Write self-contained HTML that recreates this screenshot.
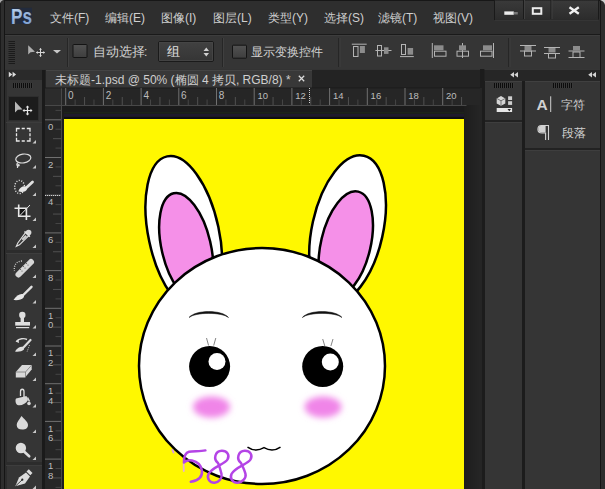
<!DOCTYPE html>
<html><head><meta charset="utf-8">
<style>
*{margin:0;padding:0;box-sizing:border-box}
html,body{width:605px;height:489px;overflow:hidden;background:#1c1c1c;font-family:"Liberation Sans",sans-serif;}
.a{position:absolute}
.t{position:absolute;color:#cfcfcf;font-size:12px;line-height:14px;white-space:nowrap}
</style></head><body>
<!-- menu bar -->
<div class="a" style="left:2px;top:0;width:603px;height:35px;background:#2e2e2e;border-top:1px solid #171717"></div>
<div class="a" style="left:0;top:33.5px;width:605px;height:2px;background:#1a1a1a"></div>
<svg class="a" style="left:0;top:0" width="40" height="34"><defs><linearGradient id="psg" x1="0" y1="0" x2="0.4" y2="1"><stop offset="0" stop-color="#c2d8ef"/><stop offset="1" stop-color="#7d9fd0"/></linearGradient></defs>
<rect x="11.5" y="7.8" width="20.5" height="16" fill="#222b3d"/>
<text x="11" y="23.6" font-size="21.5" font-weight="bold" fill="url(#psg)" font-family="Liberation Sans" textLength="21" lengthAdjust="spacingAndGlyphs">Ps</text>
<path d="M0 0 H3 C1.5 0.5 0.5 1.5 0 3Z" fill="#9a9a9a"/></svg>
<div class="t" style="left:50px;top:11px">文件(F)</div>
<div class="t" style="left:105px;top:11px">编辑(E)</div>
<div class="t" style="left:161px;top:11px">图像(I)</div>
<div class="t" style="left:213px;top:11px">图层(L)</div>
<div class="t" style="left:268px;top:11px">类型(Y)</div>
<div class="t" style="left:324px;top:11px">选择(S)</div>
<div class="t" style="left:378px;top:11px">滤镜(T)</div>
<div class="t" style="left:433px;top:11px">视图(V)</div>
<!-- window controls -->
<svg class="a" style="left:490px;top:0" width="115" height="24" viewBox="490 0 115 24">
<defs><linearGradient id="wc" x1="0" y1="0" x2="0" y2="1"><stop offset="0" stop-color="#3a3a3a"/><stop offset="1" stop-color="#2c2c2c"/></linearGradient></defs>
<rect x="494.5" y="0" width="104" height="19.5" fill="url(#wc)" stroke="#1a1a1a" stroke-width="1"/>
<rect x="495" y="19.5" width="103.5" height="1" fill="#3c3c3c"/>
<rect x="523" y="0" width="1" height="19" fill="#1a1a1a"/><rect x="524" y="0" width="1" height="19" fill="#404040"/>
<rect x="550.5" y="0" width="1" height="19" fill="#1a1a1a"/><rect x="551.5" y="0" width="1" height="19" fill="#404040"/>
<rect x="504.3" y="11.4" width="9.5" height="3.4" fill="#ececec"/>
<rect x="513.8" y="12" width="4" height="2.5" fill="#777"/>
<rect x="532.8" y="8.2" width="8.5" height="5.6" fill="none" stroke="#ececec" stroke-width="2"/>
<path d="M569.5 7.2 L578.8 13.8 M578.8 7.2 L569.5 13.8" stroke="#f0f0f0" stroke-width="2.3"/>
<path d="M599 0 C602 0 605 2 605 5 V0Z" fill="#c8c8c8"/>
</svg>

<!-- options bar -->
<div class="a" style="left:0;top:35px;width:605px;height:35px;background:#353535;border-top:1px solid #3d3d3d"></div>
<div class="a" style="left:0;top:69px;width:605px;height:1px;background:#1a1a1a"></div>


<!-- options bar contents -->
<svg class="a" style="left:0;top:35px" width="605" height="35" viewBox="0 35 605 35">
<rect x="0" y="35" width="5" height="35" fill="#242424"/>
<rect x="1.5" y="35" width="1.5" height="35" fill="#1a1a1a"/>
<g fill="#1b1b1b">
<rect x="8.5" y="41" width="6.5" height="1"/><rect x="8.5" y="43" width="6.5" height="1"/><rect x="8.5" y="45" width="6.5" height="1"/><rect x="8.5" y="47" width="6.5" height="1"/><rect x="8.5" y="49" width="6.5" height="1"/><rect x="8.5" y="51" width="6.5" height="1"/><rect x="8.5" y="53" width="6.5" height="1"/><rect x="8.5" y="55" width="6.5" height="1"/><rect x="8.5" y="57" width="6.5" height="1"/><rect x="8.5" y="59" width="6.5" height="1"/><rect x="8.5" y="61" width="6.5" height="1"/><rect x="8.5" y="63" width="6.5" height="1"/>
</g>
<path d="M28.2 45.2 L28.2 54.5 L30.5 52.3 L35 51.8Z" fill="#b0b0b0"/>
<g stroke="#d8d8d8" stroke-width="1" fill="none"><path d="M40.5 48.5 V56.5 M36.5 52.5 H44.5"/></g>
<path d="M40.5 48 l-1.5 1.7 h3Z M40.5 57 l-1.5 -1.7 h3Z M36 52.5 l1.7 -1.5 v3Z M45 52.5 l-1.7 -1.5 v3Z" fill="#d8d8d8"/>
<path d="M53 50 L61 50 L57 53.6Z" fill="#c8c8c8"/>
<rect x="67" y="38" width="1" height="29" fill="#262626"/><rect x="68" y="38" width="1" height="29" fill="#3f3f3f"/>
<defs><linearGradient id="cb" x1="0" y1="0" x2="0" y2="1"><stop offset="0" stop-color="#525252"/><stop offset="1" stop-color="#3e3e3e"/></linearGradient>
<linearGradient id="dd" x1="0" y1="0" x2="0" y2="1"><stop offset="0" stop-color="#414141"/><stop offset="1" stop-color="#353535"/></linearGradient></defs>
<rect x="73" y="44.5" width="14" height="13" rx="0.6" fill="url(#cb)" stroke="#141414" stroke-width="1"/>
<rect x="158.5" y="41.5" width="55" height="20" rx="1.5" fill="url(#dd)" stroke="#1a1a1a" stroke-width="1"/><rect x="159.5" y="42.5" width="53" height="18" fill="none" stroke="#474747" stroke-width="0.8"/>
<path d="M203.5 51 L206.3 47.5 L209 51Z M203.5 53 L206.3 56.5 L209 53Z" fill="#d0d0d0"/>
<rect x="222" y="38" width="1" height="29" fill="#262626"/><rect x="223" y="38" width="1" height="29" fill="#3f3f3f"/>
<rect x="232.5" y="45.2" width="14" height="13" rx="0.6" fill="url(#cb)" stroke="#141414" stroke-width="1"/>
<rect x="338" y="38" width="1.2" height="29" fill="#262626"/><rect x="339.5" y="38" width="1" height="29" fill="#3f3f3f"/>
<rect x="508" y="38" width="1.2" height="29" fill="#262626"/><rect x="509.5" y="38" width="1" height="29" fill="#3f3f3f"/>
<g fill="none" stroke="#b4b4b4" stroke-width="1">
<!-- align top -->
<path d="M351.8 44.2 H366.7"/><rect x="353.5" y="46.5" width="4.5" height="10"/>
<!-- align vcenter -->
<path d="M375.4 50.5 H391.5"/><rect x="377.5" y="45.5" width="4" height="10.5"/>
<!-- align bottom -->
<path d="M400 56.6 H413.8"/><rect x="401.5" y="44.5" width="4" height="10"/>
<!-- align left -->
<path d="M432.3 43 V58"/><rect x="434.5" y="51.2" width="11.5" height="5"/>
<!-- align hcenter -->
<path d="M462.5 43 V58"/><rect x="457" y="51.2" width="11.5" height="5"/>
<!-- align right -->
<path d="M493.5 43 V58"/><rect x="480.5" y="51.2" width="11.5" height="5"/>
<!-- distribute -->
<path d="M520 45.5 H536 M520 51 H536"/><rect x="524.5" y="51" width="7" height="5"/>
<path d="M544 47.5 H560 M544 53.5 H560"/><rect x="548.5" y="53.5" width="7" height="4.5"/>
<path d="M568.5 51 H584.5 M568.5 57.5 H584.5"/><rect x="573" y="52" width="7" height="5.5"/>
</g>
<g fill="#8c8c8c">
<rect x="359.9" y="46" width="5" height="7"/>
<rect x="384" y="47.3" width="4.5" height="6.6"/>
<rect x="407.6" y="48" width="5.5" height="6.7"/>
<rect x="434" y="45.3" width="9.5" height="5"/>
<rect x="459" y="45.3" width="7" height="5"/>
<rect x="483" y="45.3" width="9" height="5"/>
<rect x="524.5" y="46" width="7" height="4"/>
<rect x="548.5" y="48" width="7" height="4.5"/>
<rect x="573" y="46" width="7" height="4.5"/>
</g>
</svg>
<div class="t" style="left:93px;top:45px;font-size:12.7px;line-height:14px">自动选择</div><div class="t" style="left:144px;top:45px;font-size:12px;line-height:14px">:</div>
<div class="t" style="left:167px;top:45px;font-size:13px;line-height:14px;color:#e0e0e0">组</div>
<div class="t" style="left:251px;top:45px;font-size:12px;line-height:14px">显示变换控件</div>

<!-- header row -->
<div class="a" style="left:0;top:69px;width:605px;height:20px;background:#232323;border-top:1px solid #333"></div>

<!-- left toolbar -->
<div class="a" style="left:5px;top:80px;width:37px;height:409px;background:#353535"></div>
<div class="a" style="left:42px;top:70px;width:3px;height:419px;background:#1a1a1a"></div>


<!-- toolbar icons -->
<svg class="a" style="left:0;top:0" width="45" height="489" viewBox="0 0 45 489">
<rect x="5" y="70" width="2" height="419" fill="#2c2c2c"/>
<rect x="6" y="70" width="36" height="10" fill="#2a2a2a"/>
<path d="M8.8 71.8 L12.3 74.5 L8.8 77.2Z M12.6 71.8 L16.1 74.5 L12.6 77.2Z" fill="#dcdcdc"/>
<g><rect x="13" y="83" width="1" height="5" fill="#0c0c0c"/><rect x="14" y="83" width="1" height="5" fill="#3a3a3a"/><rect x="15" y="83" width="1" height="5" fill="#0c0c0c"/><rect x="16" y="83" width="1" height="5" fill="#3a3a3a"/><rect x="17" y="83" width="1" height="5" fill="#0c0c0c"/><rect x="18" y="83" width="1" height="5" fill="#3a3a3a"/><rect x="19" y="83" width="1" height="5" fill="#0c0c0c"/><rect x="20" y="83" width="1" height="5" fill="#3a3a3a"/><rect x="21" y="83" width="1" height="5" fill="#0c0c0c"/><rect x="22" y="83" width="1" height="5" fill="#3a3a3a"/><rect x="23" y="83" width="1" height="5" fill="#0c0c0c"/><rect x="24" y="83" width="1" height="5" fill="#3a3a3a"/><rect x="25" y="83" width="1" height="5" fill="#0c0c0c"/><rect x="26" y="83" width="1" height="5" fill="#3a3a3a"/><rect x="27" y="83" width="1" height="5" fill="#0c0c0c"/><rect x="28" y="83" width="1" height="5" fill="#3a3a3a"/><rect x="29" y="83" width="1" height="5" fill="#0c0c0c"/><rect x="30" y="83" width="1" height="5" fill="#3a3a3a"/><rect x="31" y="83" width="1" height="5" fill="#0c0c0c"/><rect x="32" y="83" width="1" height="5" fill="#3a3a3a"/></g>
<rect x="8.5" y="96.5" width="30" height="24" fill="#1c1c1c" stroke="#2e2e2e" stroke-width="1"/>
<path d="M15 101.5 L15 112.5 L17.8 109.8 L22.5 109.5Z" fill="#b8b8b8"/>
<g stroke="#e6e6e6" stroke-width="1.2" fill="none"><path d="M27.5 106 V115 M23 110.5 H32"/></g>
<path d="M27.5 105.5 l-1.8 2 h3.6Z M27.5 115.5 l-1.8 -2 h3.6Z M22.5 110.5 l2 -1.8 v3.6Z M32.5 110.5 l-2 -1.8 v3.6Z" fill="#e6e6e6"/>
<!-- separators -->
<rect x="6" y="122" width="36" height="1" fill="#3c3c3c"/>
<rect x="6" y="250" width="36" height="3" fill="#2c2c2c"/>
<rect x="6" y="253" width="36" height="1" fill="#3d3d3d"/>
<rect x="6" y="462" width="36" height="3" fill="#2c2c2c"/>
<rect x="6" y="465" width="36" height="1" fill="#3d3d3d"/>
<!-- triangles -->
<g fill="#c8c8c8">
<path d="M32.5 143.5 L36 143.5 L36 140Z"/>
<path d="M32.5 168.5 L36 168.5 L36 165Z"/>
<path d="M32.5 196 L36 196 L36 192.5Z"/>
<path d="M32.5 221 L36 221 L36 217.5Z"/>
<path d="M32.5 248 L36 248 L36 244.5Z"/>
<path d="M32.5 278 L36 278 L36 274.5Z"/>
<path d="M32.5 303.5 L36 303.5 L36 300Z"/>
<path d="M32.5 328.5 L36 328.5 L36 325Z"/>
<path d="M32.5 356 L36 356 L36 352.5Z"/>
<path d="M32.5 381 L36 381 L36 377.5Z"/>
<path d="M32.5 407.5 L36 407.5 L36 404Z"/>
<path d="M32.5 433 L36 433 L36 429.5Z"/>
<path d="M32.5 460 L36 460 L36 456.5Z"/>
<path d="M32.5 489 L36 489 L36 485.5Z"/>
</g>
<!-- marquee -->
<path d="M16.5 131.7 V128.5 H19.7 M26.8 128.5 H30 V131.7 M30 137.8 V141 H26.8 M19.7 141 H16.5 V137.8 M21.7 128.5 H24.8 M21.7 141 H24.8 M16.5 133.3 V136.2 M30 133.3 V136.2" fill="none" stroke="#e8e8e8" stroke-width="1.3"/>
<!-- lasso -->
<ellipse cx="23.3" cy="158.5" rx="7.6" ry="4.4" transform="rotate(-8 23.3 158.5)" fill="none" stroke="#dcdcdc" stroke-width="1.2"/>
<path d="M18.5 162.5 C16 163.5 16.5 166 18.5 165.8 C20 165.5 19 164 17.5 165 L17.5 168" fill="none" stroke="#dcdcdc" stroke-width="1.2"/>
<!-- quick selection -->
<ellipse cx="19.6" cy="187" rx="4.9" ry="6.6" fill="none" stroke="#e0e0e0" stroke-width="1.4" stroke-dasharray="1.1 1.5"/>
<path d="M32.5 182 L25.5 188.5" stroke="#e0e0e0" stroke-width="2.8" stroke-linecap="round"/>
<path d="M26.5 187 C24.5 185.5 20 186.5 18.3 191.3 C21.5 192.8 26.5 192 27 189Z" fill="#e6e6e6"/>
<!-- crop -->
<rect x="19.5" y="209" width="6.2" height="6.5" fill="#141414"/><g stroke="#e8e8e8" stroke-width="1.6" fill="none"><path d="M18.7 204.5 V216.2 H30.5 M14.5 208.3 H26.4 V220"/></g>
<path d="M19.5 216 L30 205" stroke="#e0e0e0" stroke-width="1"/>
<!-- eyedropper -->
<circle cx="28.6" cy="232.6" r="2.8" fill="#d8d8d8"/>
<path d="M25.8 232.2 L29 235.4 L19.5 244.8 L16.3 246.3 L17.8 243Z" fill="#3a3a3a" stroke="#e0e0e0" stroke-width="1.1"/><path d="M25.5 235 L27 236.5 L23 240.5 L21.5 239Z" fill="#d0d0d0"/>
<path d="M24.5 231.5 L29.8 236.8" stroke="#e0e0e0" stroke-width="1.5"/>
<!-- healing -->
<path d="M22 261 C16 261 13.5 266 14.5 271" fill="none" stroke="#d0d0d0" stroke-width="1.3" stroke-dasharray="1 1.3"/>
<path d="M18.5 274.5 L31 262" stroke="#d6d6d6" stroke-width="6" stroke-linecap="round"/>
<g fill="#555"><circle cx="22" cy="271" r="0.6"/><circle cx="25" cy="268" r="0.6"/><circle cx="28" cy="265" r="0.6"/><circle cx="20.5" cy="269.5" r="0.6"/><circle cx="23.5" cy="266.5" r="0.6"/><circle cx="26.5" cy="263.5" r="0.6"/></g>
<!-- brush -->
<path d="M31.5 286.8 L22.8 295.5" stroke="#e0e0e0" stroke-width="2.4" stroke-linecap="round"/>
<path d="M23.5 294.5 C21 293 16.5 295 13.5 300 C17 300.5 22 300 24 297Z" fill="#e6e6e6"/>
<!-- stamp -->
<circle cx="22.3" cy="315" r="3.2" fill="#dedede"/>
<rect x="20.6" y="316" width="3.4" height="6.5" fill="#dedede"/>
<rect x="15.2" y="322" width="14.8" height="3.6" fill="#dedede"/>
<rect x="16" y="327" width="13.2" height="1.2" fill="#dedede"/>
<!-- history brush -->
<path d="M16.5 341.5 C19 338.5 24 338 27 339.5" fill="none" stroke="#dcdcdc" stroke-width="1.4"/>
<path d="M15.5 341.5 L18.5 339 L19 343Z" fill="#dcdcdc"/>
<path d="M30.5 340 L23 348" stroke="#dcdcdc" stroke-width="2.2" stroke-linecap="round"/>
<path d="M23.5 347 C21 346 17 347.5 15 351.5 C18 352 22 351.5 24 349.5Z" fill="#dedede"/>
<path d="M29.5 345 L27 352" stroke="#bbb" stroke-width="1" stroke-dasharray="1 1"/>
<!-- eraser -->
<path d="M15.8 372 L22 365 L31.7 365 L31.7 369.5 L25 377.5 L15.8 377.5Z" fill="#d8d8d8"/>
<path d="M15.8 372 L25.5 372 L31.7 365 M25.5 372 V377.5" stroke="#7a7a7a" stroke-width="0.8" fill="none"/>
<!-- bucket -->
<path d="M20.5 396 V391.5 C20.5 388.5 24 388.5 24 391.5 V397" fill="none" stroke="#e0e0e0" stroke-width="1.3"/>
<path d="M16 398.5 L26.5 396 L28 400 C26 404 21 406 17.5 405 C15.5 404 15 400 16 398.5Z" fill="#d8d8d8"/>
<circle cx="29" cy="403.5" r="1.8" fill="#d8d8d8"/>
<path d="M27.5 397.5 L29.5 401.5" stroke="#d8d8d8" stroke-width="1.5"/>
<!-- blur -->
<path d="M21.5 416 C19 420 16.7 422.5 16.7 425 C16.7 428 18.8 429.6 22.3 429.6 C25.8 429.6 28 428 28 425 C28 422 24.5 419.5 21.5 416Z" fill="#dadada"/>
<!-- dodge -->
<circle cx="20.9" cy="448" r="5.2" fill="#dcdcdc"/>
<path d="M23.5 451 L29.2 456.3" stroke="#dcdcdc" stroke-width="2.6" stroke-linecap="round"/>
<!-- pen -->
<path d="M15.3 486.3 L19 477.5 L26 472.5 L30 476.5 L25 483.5Z" fill="#dcdcdc"/>
<path d="M26.5 471.5 L28.8 469.2 L32.5 473 L30.3 475.3Z" fill="#dcdcdc"/>
<path d="M15.8 485.8 L22 480" stroke="#333" stroke-width="0.9"/>
<circle cx="22.3" cy="479.7" r="1.1" fill="#222"/>
</svg>

<!-- doc tab -->
<div class="a" style="left:46px;top:70px;width:266px;height:18px;background:#383838;border-top:1px solid #444"></div>
<div class="t" style="left:55px;top:73px;font-size:12px">未标题-1.psd @ 50% (椭圆 4 拷贝, RGB/8) *</div>
<svg class="a" style="left:297px;top:74px" width="10" height="9"><path d="M1.8 1.8L7.2 7.2M7.2 1.8L1.8 7.2" stroke="#dcdcdc" stroke-width="1.25"/></svg>

<!-- rulers -->
<svg class="a" style="left:0;top:0" width="605" height="489" viewBox="0 0 605 489">
<defs><linearGradient id="pb" x1="0" y1="0" x2="1" y2="0"><stop offset="0" stop-color="#1d1d1d"/><stop offset="1" stop-color="#262626"/></linearGradient></defs>
<rect x="45" y="88" width="437" height="401" fill="#1e1e1e"/>
<rect x="464" y="105" width="18" height="384" fill="url(#pb)"/>
<rect x="45" y="88" width="435" height="17" fill="#262626"/>
<rect x="45" y="88" width="16.5" height="401" fill="#262626"/>
<rect x="45" y="88" width="16.5" height="17" fill="#2c2c2c"/>
<rect x="45" y="105" width="421.5" height="1" fill="#484848"/>
<rect x="61" y="88" width="1" height="401" fill="#484848"/>
<rect x="45" y="87.5" width="437" height="0.8" fill="#1a1a1a"/>
<rect x="65.20" y="88" width="1" height="17" fill="#707070"/>
<rect x="74.62" y="99.5" width="1" height="5.5" fill="#464646"/>
<rect x="84.05" y="97" width="1" height="8" fill="#505050"/>
<rect x="93.48" y="99.5" width="1" height="5.5" fill="#464646"/>
<rect x="102.90" y="88" width="1" height="17" fill="#707070"/>
<rect x="112.33" y="99.5" width="1" height="5.5" fill="#464646"/>
<rect x="121.75" y="97" width="1" height="8" fill="#505050"/>
<rect x="131.18" y="99.5" width="1" height="5.5" fill="#464646"/>
<rect x="140.60" y="88" width="1" height="17" fill="#707070"/>
<rect x="150.03" y="99.5" width="1" height="5.5" fill="#464646"/>
<rect x="159.45" y="97" width="1" height="8" fill="#505050"/>
<rect x="168.88" y="99.5" width="1" height="5.5" fill="#464646"/>
<rect x="178.30" y="88" width="1" height="17" fill="#707070"/>
<rect x="187.73" y="99.5" width="1" height="5.5" fill="#464646"/>
<rect x="197.15" y="97" width="1" height="8" fill="#505050"/>
<rect x="206.57" y="99.5" width="1" height="5.5" fill="#464646"/>
<rect x="216.00" y="88" width="1" height="17" fill="#707070"/>
<rect x="225.43" y="99.5" width="1" height="5.5" fill="#464646"/>
<rect x="234.85" y="97" width="1" height="8" fill="#505050"/>
<rect x="244.28" y="99.5" width="1" height="5.5" fill="#464646"/>
<rect x="253.70" y="88" width="1" height="17" fill="#707070"/>
<rect x="263.12" y="99.5" width="1" height="5.5" fill="#464646"/>
<rect x="272.55" y="97" width="1" height="8" fill="#505050"/>
<rect x="281.98" y="99.5" width="1" height="5.5" fill="#464646"/>
<rect x="291.40" y="88" width="1" height="17" fill="#707070"/>
<rect x="300.83" y="99.5" width="1" height="5.5" fill="#464646"/>
<rect x="310.25" y="97" width="1" height="8" fill="#505050"/>
<rect x="319.68" y="99.5" width="1" height="5.5" fill="#464646"/>
<rect x="329.10" y="88" width="1" height="17" fill="#707070"/>
<rect x="338.53" y="99.5" width="1" height="5.5" fill="#464646"/>
<rect x="347.95" y="97" width="1" height="8" fill="#505050"/>
<rect x="357.38" y="99.5" width="1" height="5.5" fill="#464646"/>
<rect x="366.80" y="88" width="1" height="17" fill="#707070"/>
<rect x="376.23" y="99.5" width="1" height="5.5" fill="#464646"/>
<rect x="385.65" y="97" width="1" height="8" fill="#505050"/>
<rect x="395.07" y="99.5" width="1" height="5.5" fill="#464646"/>
<rect x="404.50" y="88" width="1" height="17" fill="#707070"/>
<rect x="413.93" y="99.5" width="1" height="5.5" fill="#464646"/>
<rect x="423.35" y="97" width="1" height="8" fill="#505050"/>
<rect x="432.78" y="99.5" width="1" height="5.5" fill="#464646"/>
<rect x="442.20" y="88" width="1" height="17" fill="#707070"/>
<rect x="451.62" y="99.5" width="1" height="5.5" fill="#464646"/>
<rect x="461.05" y="97" width="1" height="8" fill="#505050"/>

<text x="68.0" y="99.2" font-size="10" fill="#bdbdbd" font-family="Liberation Sans">0</text>
<text x="105.7" y="99.2" font-size="10" fill="#bdbdbd" font-family="Liberation Sans">2</text>
<text x="143.4" y="99.2" font-size="10" fill="#bdbdbd" font-family="Liberation Sans">4</text>
<text x="181.1" y="99.2" font-size="10" fill="#bdbdbd" font-family="Liberation Sans">6</text>
<text x="218.8" y="99.2" font-size="10" fill="#bdbdbd" font-family="Liberation Sans">8</text>
<text x="257.5" y="99.2" font-size="9.5" fill="#bdbdbd" font-family="Liberation Sans">10</text>
<text x="295.2" y="99.2" font-size="9.5" fill="#bdbdbd" font-family="Liberation Sans">12</text>
<text x="332.9" y="99.2" font-size="9.5" fill="#bdbdbd" font-family="Liberation Sans">14</text>
<text x="370.6" y="99.2" font-size="9.5" fill="#bdbdbd" font-family="Liberation Sans">16</text>
<text x="408.3" y="99.2" font-size="9.5" fill="#bdbdbd" font-family="Liberation Sans">18</text>
<text x="446.0" y="99.2" font-size="9.5" fill="#bdbdbd" font-family="Liberation Sans">20</text>
<rect x="55.5" y="109.88" width="5.5" height="1" fill="#464646"/>
<rect x="45" y="119.30" width="16" height="1" fill="#707070"/>
<rect x="55.5" y="128.72" width="5.5" height="1" fill="#464646"/>
<rect x="53" y="138.15" width="8" height="1" fill="#505050"/>
<rect x="55.5" y="147.57" width="5.5" height="1" fill="#464646"/>
<rect x="45" y="157.00" width="16" height="1" fill="#707070"/>
<rect x="55.5" y="166.43" width="5.5" height="1" fill="#464646"/>
<rect x="53" y="175.85" width="8" height="1" fill="#505050"/>
<rect x="55.5" y="185.28" width="5.5" height="1" fill="#464646"/>
<rect x="45" y="194.70" width="16" height="1" fill="#707070"/>
<rect x="55.5" y="204.12" width="5.5" height="1" fill="#464646"/>
<rect x="53" y="213.55" width="8" height="1" fill="#505050"/>
<rect x="55.5" y="222.98" width="5.5" height="1" fill="#464646"/>
<rect x="45" y="232.40" width="16" height="1" fill="#707070"/>
<rect x="55.5" y="241.82" width="5.5" height="1" fill="#464646"/>
<rect x="53" y="251.25" width="8" height="1" fill="#505050"/>
<rect x="55.5" y="260.68" width="5.5" height="1" fill="#464646"/>
<rect x="45" y="270.10" width="16" height="1" fill="#707070"/>
<rect x="55.5" y="279.53" width="5.5" height="1" fill="#464646"/>
<rect x="53" y="288.95" width="8" height="1" fill="#505050"/>
<rect x="55.5" y="298.38" width="5.5" height="1" fill="#464646"/>
<rect x="45" y="307.80" width="16" height="1" fill="#707070"/>
<rect x="55.5" y="317.23" width="5.5" height="1" fill="#464646"/>
<rect x="53" y="326.65" width="8" height="1" fill="#505050"/>
<rect x="55.5" y="336.07" width="5.5" height="1" fill="#464646"/>
<rect x="45" y="345.50" width="16" height="1" fill="#707070"/>
<rect x="55.5" y="354.93" width="5.5" height="1" fill="#464646"/>
<rect x="53" y="364.35" width="8" height="1" fill="#505050"/>
<rect x="55.5" y="373.78" width="5.5" height="1" fill="#464646"/>
<rect x="45" y="383.20" width="16" height="1" fill="#707070"/>
<rect x="55.5" y="392.63" width="5.5" height="1" fill="#464646"/>
<rect x="53" y="402.05" width="8" height="1" fill="#505050"/>
<rect x="55.5" y="411.48" width="5.5" height="1" fill="#464646"/>
<rect x="45" y="420.90" width="16" height="1" fill="#707070"/>
<rect x="55.5" y="430.33" width="5.5" height="1" fill="#464646"/>
<rect x="53" y="439.75" width="8" height="1" fill="#505050"/>
<rect x="55.5" y="449.18" width="5.5" height="1" fill="#464646"/>
<rect x="45" y="458.60" width="16" height="1" fill="#707070"/>
<rect x="55.5" y="468.03" width="5.5" height="1" fill="#464646"/>
<rect x="53" y="477.45" width="8" height="1" fill="#505050"/>
<rect x="55.5" y="486.88" width="5.5" height="1" fill="#464646"/>
<text x="48" y="130.0" font-size="9.5" fill="#bdbdbd" font-family="Liberation Sans">0</text>
<text x="48" y="167.7" font-size="9.5" fill="#bdbdbd" font-family="Liberation Sans">2</text>
<text x="48" y="205.4" font-size="9.5" fill="#bdbdbd" font-family="Liberation Sans">4</text>
<text x="48" y="243.1" font-size="9.5" fill="#bdbdbd" font-family="Liberation Sans">6</text>
<text x="48" y="280.8" font-size="9.5" fill="#bdbdbd" font-family="Liberation Sans">8</text>
<text x="48" y="318.5" font-size="9.5" fill="#bdbdbd" font-family="Liberation Sans">1</text>
<text x="48" y="328.3" font-size="9.5" fill="#bdbdbd" font-family="Liberation Sans">0</text>
<text x="48" y="356.2" font-size="9.5" fill="#bdbdbd" font-family="Liberation Sans">1</text>
<text x="48" y="366.0" font-size="9.5" fill="#bdbdbd" font-family="Liberation Sans">2</text>
<text x="48" y="393.9" font-size="9.5" fill="#bdbdbd" font-family="Liberation Sans">1</text>
<text x="48" y="403.7" font-size="9.5" fill="#bdbdbd" font-family="Liberation Sans">4</text>
<text x="48" y="431.6" font-size="9.5" fill="#bdbdbd" font-family="Liberation Sans">1</text>
<text x="48" y="441.4" font-size="9.5" fill="#bdbdbd" font-family="Liberation Sans">6</text>
<text x="48" y="469.3" font-size="9.5" fill="#bdbdbd" font-family="Liberation Sans">1</text>
<text x="48" y="479.1" font-size="9.5" fill="#bdbdbd" font-family="Liberation Sans">8</text>
<path d="M309.5 88 V104" stroke="#d0d0d0" stroke-width="1" stroke-dasharray="1 1"/>
<path d="M45 195.5 H61" stroke="#d0d0d0" stroke-width="1" stroke-dasharray="1 1"/>
<rect x="62" y="106" width="402" height="13" fill="#1b1b1b"/>
<rect x="64" y="112" width="400" height="1.5" fill="#1c241a"/>
<rect x="64" y="114" width="400" height="2.5" fill="#1f1a2c"/>
<rect x="64" y="117" width="400" height="2" fill="#101010"/>
</svg>
<div class="a" style="left:64px;top:119px;width:400px;height:370px;background:#fff800"></div>


<!-- rabbit -->
<svg class="a" style="left:0;top:0" width="605" height="489" viewBox="0 0 605 489">
<defs><clipPath id="cv"><rect x="64" y="119" width="400" height="370"/></clipPath>
<filter id="bl" x="-50%" y="-50%" width="200%" height="200%"><feGaussianBlur stdDeviation="3"/></filter></defs>
<g clip-path="url(#cv)">
<ellipse cx="183.8" cy="234.2" rx="35.3" ry="79.6" transform="rotate(-12.1 183.8 234.2)" fill="#fff" stroke="#000" stroke-width="2.5"/>
<ellipse cx="186.2" cy="247" rx="24.6" ry="55.2" transform="rotate(-13.1 186.2 247)" fill="#f590e8" stroke="#000" stroke-width="2.5"/>
<ellipse cx="347.6" cy="229.2" rx="35.5" ry="75.3" transform="rotate(12.5 347.6 229.2)" fill="#fff" stroke="#000" stroke-width="2.5"/>
<ellipse cx="345.8" cy="244.2" rx="24.8" ry="54" transform="rotate(13.3 345.8 244.2)" fill="#f590e8" stroke="#000" stroke-width="2.5"/>
<ellipse cx="262" cy="366" rx="123" ry="118" fill="#fff" stroke="#000" stroke-width="2.5"/>
<path d="M189 317.5 C195.5 309.5 222 309.5 228.5 317.5 C222 312 195.5 312 189 317.5Z" fill="#111" stroke="#111" stroke-width="0.5"/>
<path d="M302.3 317.5 C308.8 309.5 335.5 309.5 342 317.5 C335.5 312 308.8 312 302.3 317.5Z" fill="#111" stroke="#111" stroke-width="0.5"/>
<path d="M206.5 338 L208.6 345.5 M215.8 338 L213.7 345.5 M322.7 339 L324.8 346 M333 339 L330.9 346" stroke="#777" stroke-width="0.9"/>
<circle cx="209.6" cy="366.5" r="20.5" fill="#000"/>
<circle cx="217" cy="361.4" r="8.5" fill="#fff"/>
<circle cx="322.7" cy="366.5" r="20.5" fill="#000"/>
<circle cx="330.3" cy="362" r="8.5" fill="#fff"/>
<ellipse cx="211.5" cy="407" rx="18.5" ry="10.5" fill="#f085e8" filter="url(#bl)"/>
<ellipse cx="323" cy="407" rx="18.5" ry="10.5" fill="#f085e8" filter="url(#bl)"/>
<path d="M247.5 447.2 Q255.5 452.7 264 447.7 Q272.5 452.7 280.5 447.2" fill="none" stroke="#000" stroke-width="1.5"/>
<g fill="none" stroke="#b444e6" stroke-width="2.5" stroke-linecap="round" stroke-linejoin="round">
<path d="M172.5 450 L173.5 452.5" stroke="#dc9ce0" stroke-width="2"/>
<path d="M183.6 464 L183.8 471" stroke="#e8b0d8" stroke-width="1.8"/>
<path d="M205.4 450.4 C200 451.5 193 451 189 451.8 C185.5 452.5 184 457 183.9 462.5 C186 460.5 189 460 192 460.5 C197 461.5 201 465 202 470.6 C202.5 476 199 480.5 190.8 481.8"/>
<path d="M218 463 C213 459 215 451 221.8 450.8 C227 450.7 230 455 227.5 459.5 C225 464 212 467 208.5 474 C206.5 479 210 483 214.5 482.8 C219 482.5 222.5 478 221.5 474 C220.5 470 219.5 466 218 463Z"/>
<path d="M241 463 C236 459 238 451 244.8 450.8 C250 450.7 253 455 250.5 459.5 C248 464 235 467 231.5 474 C229.5 479 233 483 237.5 482.8 C242 482.5 246.5 478 245.5 474 C244.5 470 242.5 466 241 463Z"/>
</g>
</g>
</svg>

<!-- right panels -->
<svg class="a" style="left:480px;top:69px" width="125" height="420" viewBox="480 69 125 420">
<rect x="480" y="69" width="125" height="420" fill="#1c1c1c"/>
<rect x="480" y="88" width="2" height="401" fill="#252525"/>
<rect x="484.5" y="69" width="115.5" height="12" fill="#262626"/>
<rect x="484.5" y="69" width="115.5" height="1" fill="#363636"/>
<path d="M514 72 L510.2 74.7 L514 77.4Z M518 72 L514.2 74.7 L518 77.4Z" fill="#d4d4d4"/>
<path d="M592 72 L588.2 74.7 L592 77.4Z M596 72 L592.2 74.7 L596 77.4Z" fill="#d4d4d4"/>
<!-- panel 1 -->
<rect x="485" y="81" width="37" height="408" fill="#353535"/>
<rect x="485" y="81" width="37" height="1" fill="#404040"/>
<rect x="485" y="120" width="37" height="2" fill="#222"/>
<rect x="485" y="122" width="37" height="1" fill="#3e3e3e"/>
<g><rect x="494" y="83" width="1" height="5" fill="#0c0c0c"/><rect x="495" y="83" width="1" height="5" fill="#3a3a3a"/><rect x="496" y="83" width="1" height="5" fill="#0c0c0c"/><rect x="497" y="83" width="1" height="5" fill="#3a3a3a"/><rect x="498" y="83" width="1" height="5" fill="#0c0c0c"/><rect x="499" y="83" width="1" height="5" fill="#3a3a3a"/><rect x="500" y="83" width="1" height="5" fill="#0c0c0c"/><rect x="501" y="83" width="1" height="5" fill="#3a3a3a"/><rect x="502" y="83" width="1" height="5" fill="#0c0c0c"/><rect x="503" y="83" width="1" height="5" fill="#3a3a3a"/><rect x="504" y="83" width="1" height="5" fill="#0c0c0c"/><rect x="505" y="83" width="1" height="5" fill="#3a3a3a"/><rect x="506" y="83" width="1" height="5" fill="#0c0c0c"/><rect x="507" y="83" width="1" height="5" fill="#3a3a3a"/><rect x="508" y="83" width="1" height="5" fill="#0c0c0c"/><rect x="509" y="83" width="1" height="5" fill="#3a3a3a"/><rect x="510" y="83" width="1" height="5" fill="#0c0c0c"/><rect x="511" y="83" width="1" height="5" fill="#3a3a3a"/><rect x="512" y="83" width="1" height="5" fill="#0c0c0c"/><rect x="513" y="83" width="1" height="5" fill="#3a3a3a"/></g>
<path d="M501 96 L505.3 98.4 L505.3 103.4 L501 105.8 L496.7 103.4 L496.7 98.4Z" fill="#d6d6d6"/>
<path d="M496.7 98.4 L501 100.8 L505.3 98.4 M501 100.8 V105.8" stroke="#6a6a6a" stroke-width="0.9" fill="none"/>
<rect x="508.1" y="96.3" width="4" height="3.7" fill="#cfcfcf"/>
<rect x="508.1" y="101.2" width="4" height="3.7" fill="#cfcfcf"/>
<rect x="496.7" y="108" width="15.4" height="4" fill="#e6e6e6"/>
<path d="M507.5 109 L511 109 L509.3 111.3Z" fill="#222"/>
<!-- panel 2 -->
<rect x="525" y="81" width="75" height="408" fill="#353535"/>
<rect x="525" y="81" width="75" height="1" fill="#404040"/>
<rect x="525" y="148" width="75" height="2" fill="#222"/>
<rect x="525" y="150" width="75" height="1" fill="#3e3e3e"/>
<g><rect x="553" y="83" width="1" height="5" fill="#0c0c0c"/><rect x="554" y="83" width="1" height="5" fill="#3a3a3a"/><rect x="555" y="83" width="1" height="5" fill="#0c0c0c"/><rect x="556" y="83" width="1" height="5" fill="#3a3a3a"/><rect x="557" y="83" width="1" height="5" fill="#0c0c0c"/><rect x="558" y="83" width="1" height="5" fill="#3a3a3a"/><rect x="559" y="83" width="1" height="5" fill="#0c0c0c"/><rect x="560" y="83" width="1" height="5" fill="#3a3a3a"/><rect x="561" y="83" width="1" height="5" fill="#0c0c0c"/><rect x="562" y="83" width="1" height="5" fill="#3a3a3a"/><rect x="563" y="83" width="1" height="5" fill="#0c0c0c"/><rect x="564" y="83" width="1" height="5" fill="#3a3a3a"/><rect x="565" y="83" width="1" height="5" fill="#0c0c0c"/><rect x="566" y="83" width="1" height="5" fill="#3a3a3a"/><rect x="567" y="83" width="1" height="5" fill="#0c0c0c"/><rect x="568" y="83" width="1" height="5" fill="#3a3a3a"/><rect x="569" y="83" width="1" height="5" fill="#0c0c0c"/><rect x="570" y="83" width="1" height="5" fill="#3a3a3a"/><rect x="571" y="83" width="1" height="5" fill="#0c0c0c"/><rect x="572" y="83" width="1" height="5" fill="#3a3a3a"/></g>
<text x="536.6" y="109.8" font-size="15.5" font-weight="bold" fill="#d2d2d2" font-family="Liberation Sans">A</text>
<rect x="550.2" y="96.3" width="1" height="15.7" fill="#d0d0d0"/>
<path d="M549 125.5 H541.5 C538.5 125.5 537.9 127.5 537.9 129.2 C537.9 131.5 539.5 133 542 133 H545.6 V140 M548.5 125.5 V140" fill="none" stroke="#d2d2d2" stroke-width="1.1"/>
<path d="M545.6 126 H541.5 C538.5 126 538.4 127.5 538.4 129.2 C538.4 131.5 539.5 132.5 542 132.5 H545.6Z" fill="#d2d2d2"/>
<rect x="600" y="69" width="3" height="420" fill="#1a1a1a"/>
<rect x="603" y="69" width="2" height="420" fill="#2a2a2a"/>
</svg>
<div class="t" style="left:561px;top:98px;font-size:12px;color:#d0d0d0">字符</div>
<div class="t" style="left:562px;top:126px;font-size:12px;color:#d0d0d0">段落</div>
<div class="a" style="left:0;top:0;width:4.2px;height:489px;background:#2e2e2e;border-left:0.7px solid #1a1a1a"></div>
<div class="a" style="left:4.2px;top:1px;width:0.8px;height:488px;background:#151515"></div>
<div class="a" style="left:600px;top:0;width:1px;height:489px;background:#151515"></div>
<div class="a" style="left:601px;top:0;width:4px;height:489px;background:#2d2d2d"></div>
<svg class="a" style="left:0;top:0" width="4" height="4"><path d="M0 0 H3.5 C2 0.4 0.4 2 0 3.5Z" fill="#aaa"/></svg>
<svg class="a" style="left:599px;top:0" width="6" height="6"><path d="M6 0 V5 C5.5 2.5 3.5 0.5 1 0Z" fill="#d0d0d0"/></svg>
</body></html>
